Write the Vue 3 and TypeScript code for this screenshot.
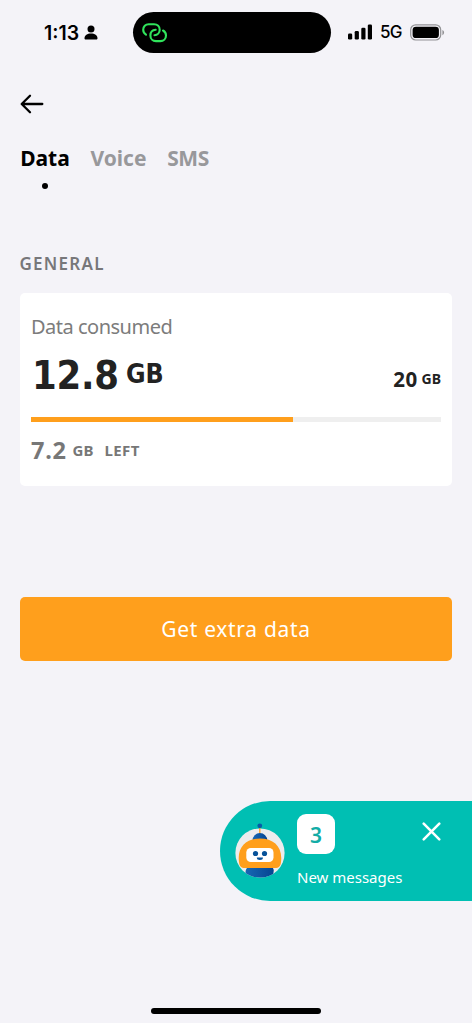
<script setup lang="ts">
import { ref } from 'vue'

interface Tab {
  id: string
  label: string
}

const tabs: Tab[] = [
  { id: 'data', label: 'Data' },
  { id: 'voice', label: 'Voice' },
  { id: 'sms', label: 'SMS' },
]
const activeTab = ref('data')
const usage = { consumed: 12.8, total: 20, left: 7.2 }
const percent = `${(usage.consumed / usage.total) * 100}%`
const unread = ref(3)
const chatOpen = ref(true)
</script>

<template>
  <main class="screen">
    <header class="status">
      <div class="clock">
        <span class="time">1:13</span>
        <svg class="person" width="14" height="15" viewBox="0 0 14 15">
          <circle cx="7" cy="3.9" r="3.500" />
          <path d="M.5 13.200C.5 10.300 3.300 8.500 7 8.500s6.500 1.800 6.500 4.700c0 .9-.5 1.300-1.300 1.300H1.800C1 14.500.5 14.100.5 13.200Z" />
        </svg>
      </div>
      <div class="island">
        <svg width="27" height="22" viewBox="0 0 27 22" fill="none" stroke="#30e45c" stroke-width="2.100" stroke-linecap="round">
          <path d="M5 12.600C3.300 11.500 2.200 9.800 2.200 7.700c0-3.300 2.300-5.500 5.500-5.500h5.400c3.300 0 5.600 2.300 5.600 5.600 0 3-2.200 5.300-5.200 5.500" />
          <path d="M14.700 7.700c-3.300.2-5.300 2.600-5.300 5.700 0 3.300 2.300 5.700 5.600 5.700h4.400c3.200 0 5.600-2.300 5.600-5.600 0-2.200-1.200-4-3-5" />
        </svg>
      </div>
      <div class="signals">
        <svg class="bars" width="25" height="16" viewBox="0 0 25 16">
          <rect x="0" y="9.500" width="4.200" height="6" rx="1.300" />
          <rect x="6.700" y="7" width="4.200" height="8.500" rx="1.300" />
          <rect x="13.300" y="3.700" width="4.200" height="11.800" rx="1.300" />
          <rect x="19.800" y=".4" width="4.200" height="15.100" rx="1.300" />
        </svg>
        <span class="network">5G</span>
        <svg class="battery" width="35" height="17" viewBox="0 0 35 17">
          <rect x=".7" y=".8" width="30" height="15.200" rx="5" fill="none" stroke="#929295" stroke-width="1.200" />
          <rect x="2.600" y="2.700" width="26.300" height="11.400" rx="3.400" />
          <path d="M32.400 6v5.200c1.100-.5 1.700-1.500 1.700-2.600s-.6-2.100-1.700-2.600Z" fill="#929295" />
        </svg>
      </div>
    </header>

    <button class="back" aria-label="Back">
      <svg width="24" height="20" viewBox="0 0 24 20" fill="none" stroke="#000" stroke-width="2.300" stroke-linecap="round" stroke-linejoin="round">
        <path d="M22.300 10H2M10 1.800 1.700 10l8.300 8.200" />
      </svg>
    </button>

    <nav class="tabs">
      <button
        v-for="tab in tabs"
        :key="tab.id"
        :class="['tab', tab.id, { active: activeTab === tab.id }]"
        @click="activeTab = tab.id"
      >
        <span>{{ tab.label }}</span>
        <i class="dot"></i>
      </button>
    </nav>

    <h2 class="section">GENERAL</h2>

    <section class="card">
      <p class="caption">Data consumed</p>
      <div class="amounts">
        <div class="consumed"><strong>{{ usage.consumed }}</strong><span>GB</span></div>
        <div class="total"><strong>{{ usage.total }}</strong><span>GB</span></div>
      </div>
      <div class="track"><div class="fill" :style="{ width: percent }"></div></div>
      <div class="left"><strong>{{ usage.left }}</strong><span class="unit">GB</span><span class="word">LEFT</span></div>
    </section>

    <button class="cta"><span>Get extra data</span></button>

    <aside v-if="chatOpen" class="chat">
      <svg class="robot" width="50" height="56" viewBox="0 0 50 56">
        <defs>
          <clipPath id="face"><circle cx="25" cy="30" r="24.600" /></clipPath>
          <linearGradient id="blue"><stop stop-color="#1768b4" /><stop offset="1" stop-color="#064591" /></linearGradient>
        </defs>
        <circle cx="25" cy="30" r="24.600" fill="#ececed" />
        <g clip-path="url(#face)">
          <path d="M10.500 49c0-3 2-5 4-6h21c2 1 4 3 3 6v7h-28Z" fill="url(#blue)" />
        </g>
        <path d="M24.800 4v8" stroke="#ff9f1c" stroke-width="1.300" />
        <circle cx="24.800" cy="2.800" r="2.400" fill="#075ba8" />
        <path d="M17.500 17.500a7.400 7.500 0 0 1 14.800 0Z" fill="url(#blue)" />
        <path d="M4 39C2 24 11 15.400 25 15.400S48 24 46 39c-.4 4-2 6-6 6H10c-4 0-5.600-2-6-6Z" fill="#ff9f1c" />
        <rect x="11.300" y="25" width="27.200" height="14" rx="4.500" fill="#fff" />
        <circle cx="20.500" cy="30.500" r="2.600" fill="#075299" />
        <circle cx="29.500" cy="30.500" r="2.600" fill="#075299" />
        <path d="M21.800 34.500h6.200a3.100 2.500 0 0 1-6.200 0Z" fill="#075299" />
      </svg>
      <div class="info">
        <div class="badge">{{ unread }}</div>
        <p class="message">New messages</p>
      </div>
      <button class="close" aria-label="Close" @click="chatOpen = false">
        <svg width="19" height="19" viewBox="0 0 19 19" stroke="#fff" stroke-width="2.500" stroke-linecap="round">
          <path d="m1.700 1.700 15.600 15.600m0-15.600L1.700 17.300" />
        </svg>
      </button>
    </aside>

    <div class="home"></div>
  </main>
</template>

<style>
html,
body {
  margin: 0;
  background: #f4f3f8;
}
</style>

<style scoped>
.screen {
  box-sizing: border-box;
  width: 472px;
  height: 1023px;
  overflow: hidden;
  display: flex;
  flex-direction: column;
  background: #f4f3f8;
  font-family: 'Noto Sans', 'Open Sans', sans-serif;
}
svg {
  display: block;
  flex: none;
}
button {
  padding: 0;
  border: 0;
  background: none;
  font: inherit;
  color: inherit;
}
p,
h2 {
  margin: 0;
}
span,
strong {
  white-space: nowrap;
}
strong {
  font-weight: inherit;
}
.status {
  display: flex;
  align-items: center;
  height: 41px;
  margin-top: 12px;
  font-family: Inter, sans-serif;
}
.clock {
  display: flex;
  align-items: center;
  width: 89px;
  padding-left: 44px;
}
.time {
  width: 40px;
  font-size: 19.500px;
  line-height: 24px;
  font-weight: 600;
}
.island {
  box-sizing: border-box;
  width: 198px;
  height: 41px;
  padding: 10px 0 0 8px;
  border-radius: 21px;
  background: #000;
}
.signals {
  display: flex;
  align-items: center;
  margin: 0 0 1px 17px;
}
.bars {
  margin-bottom: 1px;
}
.network {
  width: 30px;
  margin-left: 7px;
  font-size: 17px;
  line-height: 24px;
  font-weight: 500;
  letter-spacing: -0.8px;
}
.back {
  align-self: flex-start;
  margin: 41px 0 0 20px;
}
.tabs {
  display: flex;
  margin: 31px 0 0 20px;
  height: 46px;
}
.tab {
  display: flex;
  flex-direction: column;
  align-items: center;
  color: #98989b;
  font-size: 21px;
  line-height: 26px;
  font-weight: 700;
}
.data {
  width: 50px;
  margin-right: 20px;
}
.voice {
  width: 57px;
  margin-right: 20px;
}
.sms {
  width: 42px;
  letter-spacing: -0.5px;
}
.active {
  color: #000;
}
.dot {
  width: 6px;
  height: 6px;
  margin-top: 12px;
  border-radius: 50%;
}
.active .dot {
  background: #000;
}
.section {
  margin: 61px 0 0 19.500px;
  font-size: 17px;
  line-height: 24px;
  font-weight: 600;
  letter-spacing: 1.250px;
  color: #77777a;
}
.card {
  box-sizing: border-box;
  width: 432px;
  height: 193px;
  margin: 17px 0 0 20px;
  padding: 20px 11px 0;
  border-radius: 5px;
  background: #fff;
}
.caption {
  font-size: 20px;
  line-height: 28px;
  letter-spacing: -0.5px;
  color: #7c7c7c;
}
.amounts {
  display: flex;
  justify-content: space-between;
  height: 76px;
  color: #222;
}
.consumed,
.total,
.left {
  display: flex;
  font-weight: 700;
}
.consumed {
  font-family: 'DejaVu Sans', sans-serif;
  font-stretch: condensed;
}
.consumed strong {
  margin-left: 1px;
  font-size: 39.500px;
  line-height: 69px;
  letter-spacing: -0.2px;
}
.consumed span {
  margin-left: 7px;
  font-size: 26.500px;
  line-height: 66px;
}
.total strong {
  font-size: 20.500px;
  line-height: 77px;
  letter-spacing: 0.4px;
}
.total span {
  margin-left: 4px;
  font-size: 14px;
  line-height: 76px;
}
.track {
  height: 5px;
  background: #efefef;
}
.fill {
  height: 5px;
  background: #ff9f1c;
}
.left {
  margin-top: 12px;
  line-height: 33px;
  color: #777;
}
.left strong {
  font-size: 23.500px;
  letter-spacing: 0.7px;
}
.left .unit,
.left .word {
  font-size: 15px;
}
.left .unit {
  margin-left: 6px;
}
.left .word {
  margin-left: 11px;
  letter-spacing: 0.4px;
}
.cta {
  width: 432px;
  height: 64px;
  margin: 111px 0 0 20px;
  border-radius: 5px;
  background: #ff9f1c;
  color: #fff;
  font-size: 21px;
  font-weight: 400;
  letter-spacing: 0.7px;
}
.chat {
  box-sizing: border-box;
  display: flex;
  align-items: flex-start;
  align-self: flex-end;
  width: 252px;
  height: 100px;
  margin-top: 140px;
  padding-left: 15px;
  border-radius: 50px 0 0 50px;
  background: #00bfb3;
  color: #fff;
}
.robot {
  margin-top: 22px;
}
.info {
  width: 125px;
  margin-left: 12px;
}
.badge {
  width: 38px;
  height: 40px;
  margin-top: 13px;
  border-radius: 9px;
  background: #fff;
  color: #12aca6;
  font-size: 21px;
  line-height: 42px;
  font-weight: 600;
  text-align: center;
}
.message {
  margin-top: 12px;
  font-size: 15px;
  line-height: 22px;
  white-space: nowrap;
}
.close {
  margin-top: 21px;
}
.home {
  align-self: center;
  width: 170px;
  height: 6px;
  margin-top: 107px;
  border-radius: 3px;
  background: #000;
}
</style>
